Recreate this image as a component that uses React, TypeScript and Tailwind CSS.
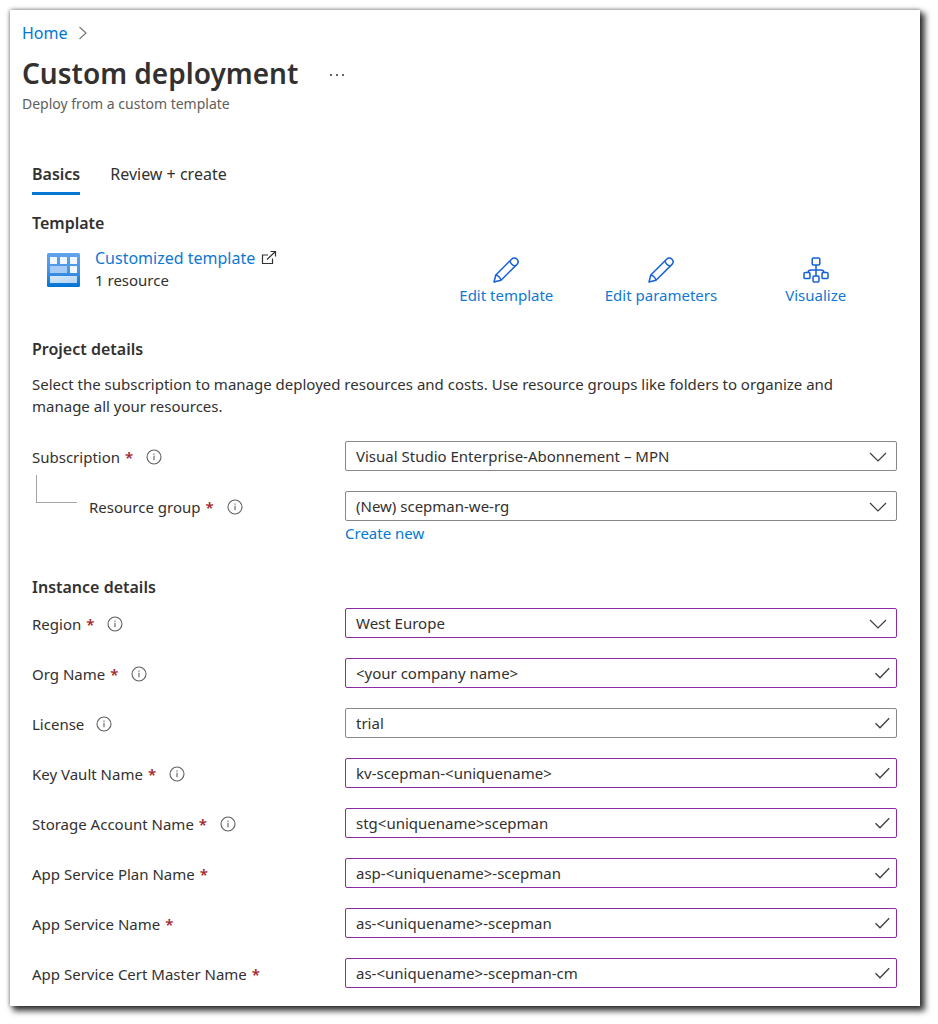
import { useState } from 'react';
import type { ReactNode } from 'react';

function InfoIcon() {
  return (
    <svg className="ml-3 size-4 shrink-0" viewBox="0 0 16 16" fill="none" stroke="#5f5e5c" role="img" aria-label="More information">
      <circle cx="8" cy="8" r="7" strokeWidth="1.1" />
      <path d="M8 6.7V11.3" strokeWidth="1.1" />
      <path d="M8 4.6V5.7" strokeWidth="1.1" />
    </svg>
  );
}

function ChevronDown() {
  return (
    <svg className="pointer-events-none absolute top-2 right-2.5 h-3.5 w-4.5" viewBox="0 0 18 14" fill="none" stroke="#3f3e3c" strokeWidth="1.2" aria-hidden="true">
      <path d="M1 4L9 12L17 4" />
    </svg>
  );
}

function Check() {
  return (
    <svg className="pointer-events-none absolute top-2 right-[7px] h-3.5 w-4" viewBox="0 0 16 14" fill="none" stroke="#3f3e3c" strokeWidth="1.3" aria-hidden="true">
      <path d="M1.5 7.2L6 11.7L15.2 2.2" />
    </svg>
  );
}

function Pencil() {
  return (
    <svg className="size-[26px]" viewBox="0 0 26 26" fill="none" stroke="#1560d8" strokeWidth="1.5" strokeLinejoin="round" aria-hidden="true">
      <path d="M1 25L2.8 18L18.6 2.2A3.8 3.8 0 0 1 24 2.2A3.8 3.8 0 0 1 24 7.4L8 23.2Z" />
      <path d="M17 3.8C17.6 6.6 19.4 8.4 22.3 9M2.8 18C4.6 18.2 7.6 20.6 8 23.2" />
    </svg>
  );
}

function Hierarchy() {
  return (
    <svg className="size-[26px]" viewBox="0 0 26 26" fill="none" stroke="#1560d8" strokeWidth="1.5" aria-hidden="true">
      <rect x="9.2" y="1" width="7.6" height="7" rx="1.2" />
      <rect x="1" y="15.6" width="6" height="6" rx="1.2" />
      <rect x="10" y="19" width="6" height="6" rx="1.2" />
      <rect x="19" y="15.6" width="6" height="6" rx="1.2" />
      <path d="M13 8V19M5 15.6C5 13.6 6.4 12.9 8.5 12.9H17.5C19.6 12.9 21 13.6 21 15.6" />
    </svg>
  );
}

function TemplateIcon() {
  return (
    <svg className="mt-1.5 ml-[15px] h-[34px] w-[33px] shrink-0" viewBox="0 0 33 34" aria-hidden="true">
      <defs>
        <linearGradient id="tile" x1="0" y1="0" x2="0" y2="1">
          <stop offset="0" stopColor="#60a3ee" />
          <stop offset="0.5" stopColor="#4a95e6" />
          <stop offset="1" stopColor="#0273d2" />
        </linearGradient>
        <linearGradient id="bar" x1="0" y1="0" x2="1" y2="1">
          <stop offset="0" stopColor="#d9eafa" />
          <stop offset="1" stopColor="#b3d5f3" />
        </linearGradient>
      </defs>
      <rect width="33" height="34" rx="1.5" fill="url(#tile)" />
      <path d="M3 4H10V11H3ZM13 4H20V11H13ZM23 4H30V11H23ZM23 13H30V20H23Z" fill="#f1f7fe" />
      <path d="M3 13H20V20H3Z" fill="#a6cbf5" />
      <path d="M3 23H30V30H3Z" fill="url(#bar)" />
    </svg>
  );
}

function ExternalIcon() {
  return (
    <svg className="ml-1.5 size-4" viewBox="0 0 16 16" fill="none" stroke="#323130" strokeWidth="1.2" aria-hidden="true">
      <path d="M7 5H1.5V13.5H11.5V8.5M6 9.5L14.5 1.5M9.5 1.5H14.5V6.5" />
    </svg>
  );
}

type RowProps = { id: string; label: string; required?: boolean; info?: boolean; nested?: boolean; children: ReactNode };

function Row({ id, label, required, info, nested, children }: RowProps) {
  return (
    <div className="flex items-start">
      <div className="flex h-8 w-[313px] shrink-0 items-center">
        {nested && <span className="-mt-9 mr-3 ml-1 h-7 w-[41px] border-b border-l border-[#a6a5a4]" />}
        <label htmlFor={id} className="whitespace-nowrap">
          {label}
          {required && <span className="mr-px ml-[5px] font-semibold text-[#a4262c]">*</span>}
        </label>
        {info && <InfoIcon />}
      </div>
      <div className="min-w-0 flex-1">{children}</div>
    </div>
  );
}

const box = 'block h-[30px] w-full appearance-none rounded-xs border bg-white pl-2.5 pr-9 outline-none';

function SelectBox({ id, value, changed }: { id: string; value: string; changed?: boolean }) {
  return (
    <div className="relative">
      <select id={id} defaultValue={value} className={`${box} ${changed ? 'border-[#8a2da5]' : 'border-[#8a8886]'}`}>
        <option>{value}</option>
      </select>
      <ChevronDown />
    </div>
  );
}

function TextBox({ id, initial, changed }: { id: string; initial: string; changed?: boolean }) {
  const [value, setValue] = useState(initial);
  return (
    <div className="relative">
      <input
        id={id}
        type="text"
        value={value}
        onChange={(e) => setValue(e.target.value)}
        className={`${box} ${changed ? 'border-[#8a2da5]' : 'border-[#8a8886]'}`}
      />
      <Check />
    </div>
  );
}

const fields = [
  { id: 'org', label: 'Org Name', required: true, info: true, value: '<your company name>' },
  { id: 'license', label: 'License', required: false, info: true, value: 'trial' },
  { id: 'vault', label: 'Key Vault Name', required: true, info: true, value: 'kv-scepman-<uniquename>' },
  { id: 'storage', label: 'Storage Account Name', required: true, info: true, value: 'stg<uniquename>scepman' },
  { id: 'plan', label: 'App Service Plan Name', required: true, info: false, value: 'asp-<uniquename>-scepman' },
  { id: 'app', label: 'App Service Name', required: true, info: false, value: 'as-<uniquename>-scepman' },
  { id: 'cert', label: 'App Service Cert Master Name', required: true, info: false, value: 'as-<uniquename>-scepman-cm' },
];

const action = 'flex flex-col items-center gap-px text-[#0f78d4]';

export default function App() {
  return (
    <main className="mt-2.5 mr-[18px] mb-[18px] ml-2.5 bg-white pt-3 pr-[23px] pb-4 pl-3 font-['Noto_Sans','Open_Sans',sans-serif] text-[15px] leading-[22px] text-[#323130] shadow-[0_0_4px_rgba(0,0,0,0.5),4px_4px_6px_1px_rgba(0,0,0,0.75)]">
      <nav aria-label="Breadcrumb" className="flex items-center text-base leading-[22px]">
        <a href="#home" className="text-[#0078d4]">Home</a>
        <svg className="ml-2.5 h-3.5 w-2.5" viewBox="0 0 10 14" fill="none" stroke="#7a7977" strokeWidth="1.2" aria-hidden="true">
          <path d="M1.5 1L8 7L1.5 13" />
        </svg>
      </nav>
      <header>
        <div className="mt-2 flex items-center">
          <h1 className="text-[28px] leading-[42px] font-semibold">Custom deployment</h1>
          <button type="button" aria-label="More" className="mt-1 ml-8 flex h-6 items-center gap-1">
            <span className="size-0.5 rounded-full bg-[#323130]" />
            <span className="size-0.5 rounded-full bg-[#323130]" />
            <span className="size-0.5 rounded-full bg-[#323130]" />
          </button>
        </div>
        <p className="text-sm leading-5 text-[#605e5c]">Deploy from a custom template</p>
      </header>

      <div className="pl-2.5">
        <div role="tablist" className="mt-12 flex gap-[30px] text-base leading-6">
          <button type="button" role="tab" aria-selected="true" className="border-b-3 border-[#0078d4] pb-1.5 font-semibold">Basics</button>
          <button type="button" role="tab" aria-selected="false" className="border-b-3 border-transparent pb-1.5">Review + create</button>
        </div>

        <h2 className="mt-4 text-base leading-6 font-semibold">Template</h2>
        <div className="mt-3 flex items-start">
          <TemplateIcon />
          <div className="ml-[15px]">
            <a href="#template" className="flex items-center text-base leading-[22px] text-[#0f78d4]">
              Customized template
              <ExternalIcon />
            </a>
            <p>1 resource</p>
          </div>
          <div className="mt-2.5 mr-1 ml-auto grid w-[464px] grid-cols-3">
            <button type="button" className={action}><Pencil />Edit template</button>
            <button type="button" className={action}><Pencil />Edit parameters</button>
            <button type="button" className={action}><Hierarchy />Visualize</button>
          </div>
        </div>

        <h2 className="mt-[31px] text-base leading-6 font-semibold">Project details</h2>
        <p className="mt-3 pr-8">
          Select the subscription to manage deployed resources and costs. Use resource groups like folders to organize and manage all your resources.
        </p>
        <div className="mt-6 flex flex-col gap-[18px]">
          <Row id="subscription" label="Subscription" required info>
            <SelectBox id="subscription" value="Visual Studio Enterprise-Abonnement – MPN" />
          </Row>
          <Row id="group" label="Resource group" required info nested>
            <SelectBox id="group" value="(New) scepman-we-rg" />
            <button type="button" className="mt-px block text-[#0078d4]">Create new</button>
          </Row>
        </div>

        <h2 className="mt-[31px] text-base leading-6 font-semibold">Instance details</h2>
        <div className="mt-[9px] flex flex-col gap-[18px]">
          <Row id="region" label="Region" required info>
            <SelectBox id="region" value="West Europe" changed />
          </Row>
          {fields.map((f) => (
            <Row key={f.id} id={f.id} label={f.label} required={f.required} info={f.info}>
              <TextBox id={f.id} initial={f.value} changed={f.required} />
            </Row>
          ))}
        </div>
      </div>
    </main>
  );
}
